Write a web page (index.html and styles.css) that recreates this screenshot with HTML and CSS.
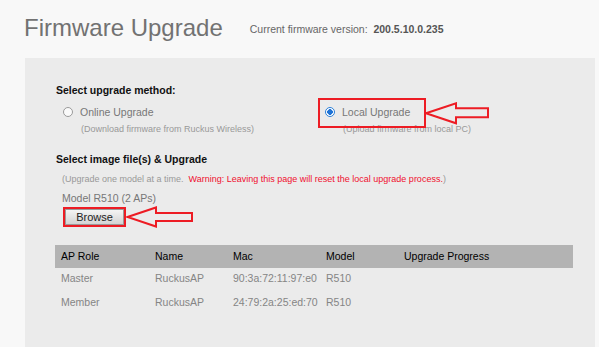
FILE: index.html
```html
<!DOCTYPE html>
<html lang="en">

<head>
<meta charset="UTF-8">
<meta name="viewport" content="width=device-width, initial-scale=1.0">
<title>Firmware Upgrade</title>
<link rel="stylesheet" href="styles.css">
</head>

<body>

<div class="page">
    <header class="page-head">
        <h1 class="title">Firmware Upgrade</h1>
        <div class="version">Current firmware version:&nbsp; <b class="version-num">200.5.10.0.235</b></div>
    </header>

    <section class="panel">
        <h3 class="section-title">Select upgrade method:</h3>

        <div class="methods">
            <div class="method">
                <label class="method-label"><input type="radio" name="method" class="radio"> Online Upgrade</label>
                <div class="method-note">(Download firmware from Ruckus Wireless)</div>
            </div>
            <div class="method method-local">
                <label class="method-label"><input type="radio" name="method" class="radio" checked> Local Upgrade</label>
                <div class="method-note">(Upload firmware from local PC)</div>
                <!-- annotation -->
                <span class="callout-box"></span>
                <svg class="callout-arrow" width="65" height="23" viewBox="0 0 65 23">
                    <polygon points="1,11.3 31,1.3 31,6.3 63,6.3 63,15.3 31,15.3 31,21.3" />
                </svg>
            </div>
        </div>

        <h3 class="section-title section-gap">Select image file(s) &amp; Upgrade</h3>

        <div class="upload">
            <p class="hint">(Upgrade one model at a time.&nbsp; <span class="warning">Warning: Leaving this page will reset the local upgrade process.</span>)</p>
            <p class="model">Model R510 (2 APs)</p>
            <div class="browse-row">
                <button class="browse" type="button">Browse</button>
                <svg class="browse-arrow" width="68" height="22" viewBox="0 0 68 22">
                    <polygon points="1.5,11 30,1.5 30,7 66,7 66,15 30,15 30,20.5" />
                </svg>
            </div>
        </div>

        <table class="ap-table">
            <thead>
                <tr>
                    <th class="col-role">AP Role</th>
                    <th class="col-name">Name</th>
                    <th class="col-mac">Mac</th>
                    <th class="col-model">Model</th>
                    <th class="col-progress">Upgrade Progress</th>
                </tr>
            </thead>
            <tbody>
                <tr>
                    <td>Master</td>
                    <td>RuckusAP</td>
                    <td>90:3a:72:11:97:e0</td>
                    <td>R510</td>
                    <td></td>
                </tr>
                <tr>
                    <td>Member</td>
                    <td>RuckusAP</td>
                    <td>24:79:2a:25:ed:70</td>
                    <td>R510</td>
                    <td></td>
                </tr>
            </tbody>
        </table>
    </section>
</div>

</body>

</html>
```

FILE: styles.css
```css
html {
    overflow: hidden;
}

body {
    font-family: "Liberation Sans", Arial, sans-serif;
    background-color: #f8f8f8;
    margin: 0;
}

.page {
    padding: 0 4px 0 25px;
}

/* header */
.page-head {
    display: flex;
    align-items: flex-start;
    height: 58px;
    padding-top: 14px;
    box-sizing: border-box;
}

.title {
    margin: 0 0 0 -1px;
    font-size: 24px;
    line-height: 28px;
    font-weight: normal;
    color: #727272;
}

.version {
    margin: 8px 0 0 27px;
    font-size: 10.5px;
    line-height: 14px;
    color: #666;
}

.version-num {
    color: #555;
}

/* panel */
.panel {
    background-color: #ebebeb;
    height: 289px;
    padding: 25px 0 0 31px;
    box-sizing: border-box;
}

.section-title {
    margin: 0;
    font-size: 10.5px;
    line-height: 14px;
    font-weight: bold;
    color: #111;
}

.section-gap {
    margin-top: 17px;
}

.methods {
    display: grid;
    grid-template-columns: 262px auto;
    margin: 8px 0 0 7px;
}

.method {
    position: relative;
}

.method-label {
    display: flex;
    align-items: center;
    font-size: 10.5px;
    line-height: 14px;
    color: #777;
}

.radio {
    appearance: none;
    width: 10px;
    height: 10px;
    margin: 0 7px 0 0;
    border: 1px solid #9a9a9a;
    border-radius: 50%;
    background-color: #fafafa;
    box-sizing: border-box;
}

.radio:checked {
    border-color: #2a7fd8;
    background: radial-gradient(circle, #1e73d6 0 2.6px, #fff 3px);
}

.method-note {
    margin-top: 4px;
    padding-left: 18px;
    font-size: 9px;
    line-height: 12px;
    color: #999;
}

.callout-box {
    position: absolute;
    left: -7px;
    top: -7px;
    width: 108px;
    height: 30px;
    border: 2px solid #ed1c24;
    box-sizing: border-box;
}

.callout-arrow {
    position: absolute;
    left: 100px;
    top: -3px;
}

.callout-arrow polygon,
.browse-arrow polygon {
    fill: none;
    stroke: #ed1c24;
    stroke-width: 2;
}

/* image select */
.upload {
    padding-left: 6px;
}

.hint {
    margin: 7px 0 0;
    font-size: 9px;
    line-height: 12px;
    color: #999;
}

.warning {
    color: #f0102e;
}

.model {
    margin: 6px 0 0;
    font-size: 10.5px;
    line-height: 14px;
    color: #777;
}

.browse-row {
    display: flex;
    align-items: center;
    margin-top: 1px;
}

.browse {
    width: 59px;
    height: 16px;
    margin-left: 3px;
    padding: 0;
    font-family: inherit;
    font-size: 11px;
    color: #222;
    background: linear-gradient(#f4f4f4, #d4d4d4);
    border: 1px solid #9a9a9a;
    border-radius: 0;
    outline: 2px solid #ed1c24;
}

.browse-arrow {
    margin-left: 2px;
}

/* table */
.ap-table {
    border-collapse: collapse;
    table-layout: fixed;
    width: 518px;
    margin: 17px 0 0 -1px;
    font-size: 10.5px;
    line-height: 14px;
}

.ap-table th,
.ap-table td {
    box-sizing: border-box;
}

.ap-table th {
    background-color: #b3b3b3;
    color: #000;
    font-weight: normal;
    text-align: left;
    padding: 4px 6px 5px;
}

.ap-table td {
    color: #858585;
    padding: 3px 6px 7px;
}

.col-role {
    width: 94px;
}

.col-name {
    width: 78px;
}

.col-mac {
    width: 93px;
}

.col-model {
    width: 78px;
}
```
